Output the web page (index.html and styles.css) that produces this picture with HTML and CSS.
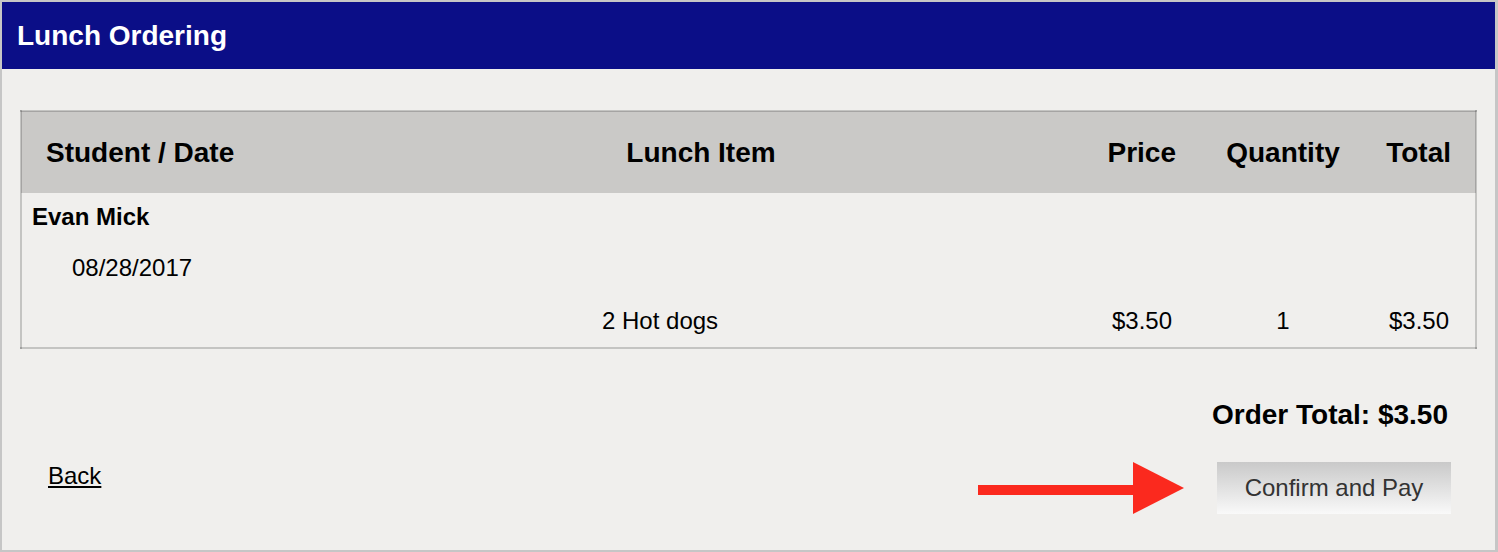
FILE: index.html
```html
<!DOCTYPE html>
<html lang="en">
<head>
    <meta charset="UTF-8">
    <meta name="viewport" content="width=device-width, initial-scale=1.0">
    <title>Lunch Ordering</title>
    <link rel="stylesheet" href="styles.css">
</head>
<body>
    <div class="frame">
        <div class="page-header">Lunch Ordering</div>

        <div class="content">
            <!-- Order summary -->
            <table class="order-table">
                <colgroup>
                    <col class="col-student">
                    <col class="col-item">
                    <col class="col-price">
                    <col class="col-qty">
                    <col class="col-total">
                </colgroup>
                <thead>
                    <tr>
                        <th class="th-student">Student / Date</th>
                        <th class="th-item">Lunch Item</th>
                        <th class="th-price">Price</th>
                        <th class="th-qty">Quantity</th>
                        <th class="th-total">Total</th>
                    </tr>
                </thead>
                <tbody>
                    <tr class="row-student">
                        <td colspan="5" class="student-name">Evan Mick</td>
                    </tr>
                    <tr class="row-date">
                        <td colspan="5" class="order-date">08/28/2017</td>
                    </tr>
                    <tr class="row-item">
                        <td></td>
                        <td class="item-name">2 Hot dogs</td>
                        <td class="item-price">$3.50</td>
                        <td class="item-qty">1</td>
                        <td class="item-total">$3.50</td>
                    </tr>
                </tbody>
            </table>

            <div class="order-total">Order Total: $3.50</div>

            <div class="actions">
                <a href="#" class="back-link">Back</a>
                <div class="pay-group">
                    <svg class="arrow" width="206" height="52" viewBox="0 0 206 52">
                        <rect x="0" y="23" width="158" height="10" fill="#fb291e"/>
                        <polygon points="155,0 206,26 155,52" fill="#fb291e"/>
                    </svg>
                    <button class="pay-button">Confirm and Pay</button>
                </div>
            </div>
        </div>
    </div>
</body>
</html>
```

FILE: styles.css
```css
body {
    margin: 0;
    font-family: "Liberation Sans", Arial, sans-serif;
    color: #000;
}
.frame {
    height: 548px;
    border: 2px solid #c6c6c6;
    border-right-width: 3px;
    background-color: #f0efed;
}
.page-header {
    height: 67px;
    line-height: 67px;
    padding-left: 15px;
    background-color: #0b0e87; /* Dark navy */
    color: #fff;
    font-size: 28px;
    font-weight: bold;
}
.content {
    padding: 41px 18px 0 18px;
}
.order-table {
    width: 100%;
    border-collapse: collapse;
    table-layout: fixed;
    border: 2px solid rgba(0, 0, 0, 0.18);
}
.col-student { width: 440px; }
.col-item { width: 480px; }
.col-price { width: 250px; }
.col-qty { width: 184px; }
.order-table thead tr {
    height: 82px;
    background-color: #cac9c7;
}
.order-table th {
    font-size: 28px;
    padding: 0;
}
.th-student {
    text-align: left;
    padding-left: 24px !important;
}
.th-item { text-align: center; }
.th-price {
    text-align: right;
    padding-right: 15px !important;
}
.th-qty { text-align: center; }
.th-total {
    text-align: right;
    padding-right: 24px !important;
}
.order-table td {
    font-size: 24px;
    padding: 0;
}
.row-student { height: 48px; }
.row-date { height: 54px; }
.row-item { height: 53px; }
.student-name {
    font-weight: bold;
    padding-left: 10px !important;
}
.order-date {
    padding-left: 50px !important;
}
.item-name {
    padding-left: 141px !important;
}
.item-price {
    text-align: right;
    padding-right: 19px !important;
}
.item-qty { text-align: center; }
.item-total {
    text-align: right;
    padding-right: 26px !important;
}
.order-total {
    margin-top: 50px;
    padding-right: 29px;
    text-align: right;
    font-size: 28px;
    font-weight: bold;
    line-height: 32px;
}
.actions {
    display: flex;
    justify-content: space-between;
    align-items: flex-start;
    margin-top: 30px;
}
.back-link {
    margin-left: 28px;
    margin-top: 1px;
    color: #000;
    font-size: 24px;
}
.pay-group {
    display: flex;
    align-items: center;
    gap: 33px;
    margin-right: 26px;
    margin-top: 1px;
}
.arrow {
    display: block;
}
.pay-button {
    width: 234px;
    height: 52px;
    border: none;
    background: linear-gradient(#c9c9c9, #f9f9f9);
    color: #333;
    font-family: "Liberation Sans", Arial, sans-serif;
    font-size: 24px;
    padding: 0;
}
```
